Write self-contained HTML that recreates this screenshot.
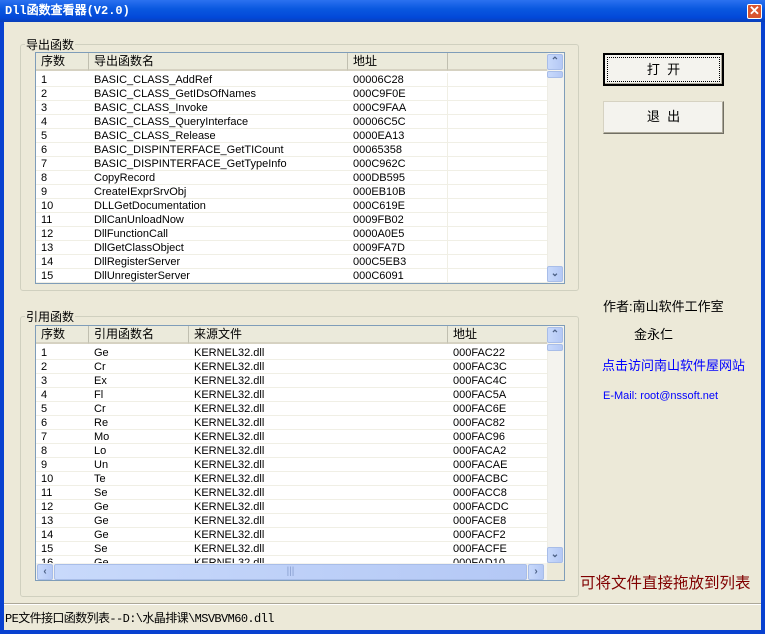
<!DOCTYPE html>
<html><head><meta charset="utf-8"><style>
*{margin:0;padding:0;box-sizing:border-box}
body{width:765px;height:634px;overflow:hidden;background:#0841d0;font-family:"Liberation Sans","Noto Sans CJK SC",sans-serif;font-size:11px;color:#000;position:relative}
.a{position:absolute}
#title{left:0;top:0;width:765px;height:22px;background:linear-gradient(#2b71f0,#0a58e0 40%,#0248d8 80%,#0a3fb8);color:#fff;font-weight:bold;font-size:12px;line-height:22px;padding-left:5px;font-family:"Liberation Mono","WenQuanYi Zen Hei",monospace}
#close{left:747px;top:4px;width:15px;height:15px;background:#d9542f;border:1px solid #fff;border-radius:2px;color:#fff;font-size:13px;font-weight:bold;line-height:12px;text-align:center}
#client{left:4px;top:22px;width:757px;height:608px;background:#ece9d8}
.grp{border:1px solid #d0d0bf;border-radius:3px}
.glbl{background:#ece9d8;padding:0 1px;font-size:12px}
.list{background:#fff;border:1px solid #7f9db9;overflow:hidden}
.hd{position:absolute;top:0;height:18px;background:#ebeadb;border-right:1px solid #c0bfb0;border-bottom:2px solid #d6d2c2;line-height:17px;padding-left:5px;font-size:12px}
.row{position:absolute;left:0;height:14px;line-height:15px;border-bottom:1px solid #f0efe5;white-space:nowrap}
.row span{position:absolute;top:0}
.vs{background:#f4f3ee;border-left:1px solid #eeede5}
.sb{background:linear-gradient(90deg,#c8d9fb,#b4c8f5);border:1px solid #a8bde8;border-radius:2px;color:#4d6185;text-align:center;font-size:10px;line-height:13px;font-weight:bold}
.btn{border:1px solid #003c74;background:#f4f3ee;border-radius:0;text-align:center;font-size:13px;line-height:30px;box-shadow:inset -1px -1px #aca899}
</style></head><body>
<div class="a" id="title">Dll函数查看器(V2.0)</div>
<div class="a" id="close">✕</div>
<div class="a" id="client"></div>

<div class="a grp" style="left:20px;top:44px;width:559px;height:247px"></div>
<div class="a glbl" style="left:25px;top:36px">导出函数</div>
<div class="a list" style="left:35px;top:52px;width:530px;height:232px">
 <div class="hd" style="left:0;width:53px">序数</div>
 <div class="hd" style="left:53px;width:259px">导出函数名</div>
 <div class="hd" style="left:312px;width:100px">地址</div>
 <div class="hd" style="left:412px;width:100px"></div>
 <div id="r1"></div>
 <div class="a vs" style="left:511px;top:0;width:17px;height:230px"></div>
 <div class="a sb" style="left:511px;top:1px;width:16px;height:16px">⌃</div>
 <div class="a sb" style="left:511px;top:18px;width:16px;height:7px"></div>
 <div class="a sb" style="left:511px;top:213px;width:16px;height:16px">⌄</div>
</div>

<div class="a grp" style="left:20px;top:316px;width:559px;height:281px"></div>
<div class="a glbl" style="left:25px;top:308px">引用函数</div>
<div class="a list" style="left:35px;top:325px;width:530px;height:256px">
 <div class="hd" style="left:0;width:53px">序数</div>
 <div class="hd" style="left:53px;width:100px">引用函数名</div>
 <div class="hd" style="left:153px;width:259px">来源文件</div>
 <div class="hd" style="left:412px;width:100px">地址</div>
 <div id="r2"></div>
 <div class="a vs" style="left:511px;top:0;width:17px;height:237px"></div>
 <div class="a sb" style="left:511px;top:1px;width:16px;height:16px">⌃</div>
 <div class="a sb" style="left:511px;top:18px;width:16px;height:7px"></div>
 <div class="a sb" style="left:511px;top:221px;width:16px;height:16px">⌄</div>
 <div class="a" style="left:0;top:237px;width:511px;height:17px;background:#f4f3ee"></div>
 <div class="a sb" style="left:1px;top:238px;width:16px;height:16px">‹</div>
 <div class="a sb" style="left:18px;top:238px;width:473px;height:16px;color:#8aa0d0;font-weight:normal">|||</div>
 <div class="a sb" style="left:492px;top:238px;width:16px;height:16px">›</div>
 <div class="a" style="left:511px;top:237px;width:17px;height:17px;background:#ece9d8"></div>
</div>

<div class="a btn" style="left:603px;top:53px;width:121px;height:33px;border:2px solid #000"><div style="border:1px dotted #000;margin:2px;line-height:23px">打&nbsp;&nbsp;开</div></div>
<div class="a btn" style="left:603px;top:101px;width:121px;height:33px;border-color:#d6d2c2 #716f64 #716f64 #d6d2c2">退&nbsp;&nbsp;出</div>

<div class="a" style="left:603px;top:296px;font-size:13px">作者:南山软件工作室</div>
<div class="a" style="left:634px;top:324px;font-size:13px">金永仁</div>
<div class="a" style="left:602px;top:355px;font-size:13px;color:#0000ff;width:155px;overflow:hidden;white-space:nowrap">点击访问南山软件屋网站</div>
<div class="a" style="left:603px;top:390px;font-size:11px;color:#0000ff">E-Mail: root@nssoft.net</div>
<div class="a" style="left:580px;top:571px;font-size:15.5px;color:#800000;white-space:nowrap">可将文件直接拖放到列表</div>

<div class="a" style="left:4px;top:603px;width:757px;height:2px;border-top:1px solid #aca899;border-bottom:1px solid #fff"></div>
<div class="a" style="left:5px;top:609px;font-size:12px;font-family:'Liberation Mono','WenQuanYi Zen Hei',monospace;letter-spacing:-0.6px">PE文件接口函数列表--D:\水晶排课\MSVBVM60.dll</div>

<script>
var e=[["1","BASIC_CLASS_AddRef","00006C28"],["2","BASIC_CLASS_GetIDsOfNames","000C9F0E"],["3","BASIC_CLASS_Invoke","000C9FAA"],["4","BASIC_CLASS_QueryInterface","00006C5C"],["5","BASIC_CLASS_Release","0000EA13"],["6","BASIC_DISPINTERFACE_GetTICount","00065358"],["7","BASIC_DISPINTERFACE_GetTypeInfo","000C962C"],["8","CopyRecord","000DB595"],["9","CreateIExprSrvObj","000EB10B"],["10","DLLGetDocumentation","000C619E"],["11","DllCanUnloadNow","0009FB02"],["12","DllFunctionCall","0000A0E5"],["13","DllGetClassObject","0009FA7D"],["14","DllRegisterServer","000C5EB3"],["15","DllUnregisterServer","000C6091"]];
var h='';e.forEach(function(r,i){h+='<div class="row" style="top:'+(20+14*i)+'px;width:511px"><span style="left:5px">'+r[0]+'</span><span style="left:58px">'+r[1]+'</span><span style="left:317px">'+r[2]+'</span><span style="left:411px;height:14px;border-left:1px solid #f0efe5"></span></div>'});
document.getElementById('r1').innerHTML=h;
var n=["Ge","Cr","Ex","Fl","Cr","Re","Mo","Lo","Un","Te","Se","Ge","Ge","Ge","Se","Ge"];
var ad=["000FAC22","000FAC3C","000FAC4C","000FAC5A","000FAC6E","000FAC82","000FAC96","000FACA2","000FACAE","000FACBC","000FACC8","000FACDC","000FACE8","000FACF2","000FACFE","000FAD10"];
h='';n.forEach(function(x,i){h+='<div class="row" style="top:'+(20+14*i)+'px;width:511px"><span style="left:5px">'+(i+1)+'</span><span style="left:58px">'+x+'</span><span style="left:158px">KERNEL32.dll</span><span style="left:417px">'+ad[i]+'</span></div>'});
document.getElementById('r2').innerHTML=h;
</script>
</body></html>
